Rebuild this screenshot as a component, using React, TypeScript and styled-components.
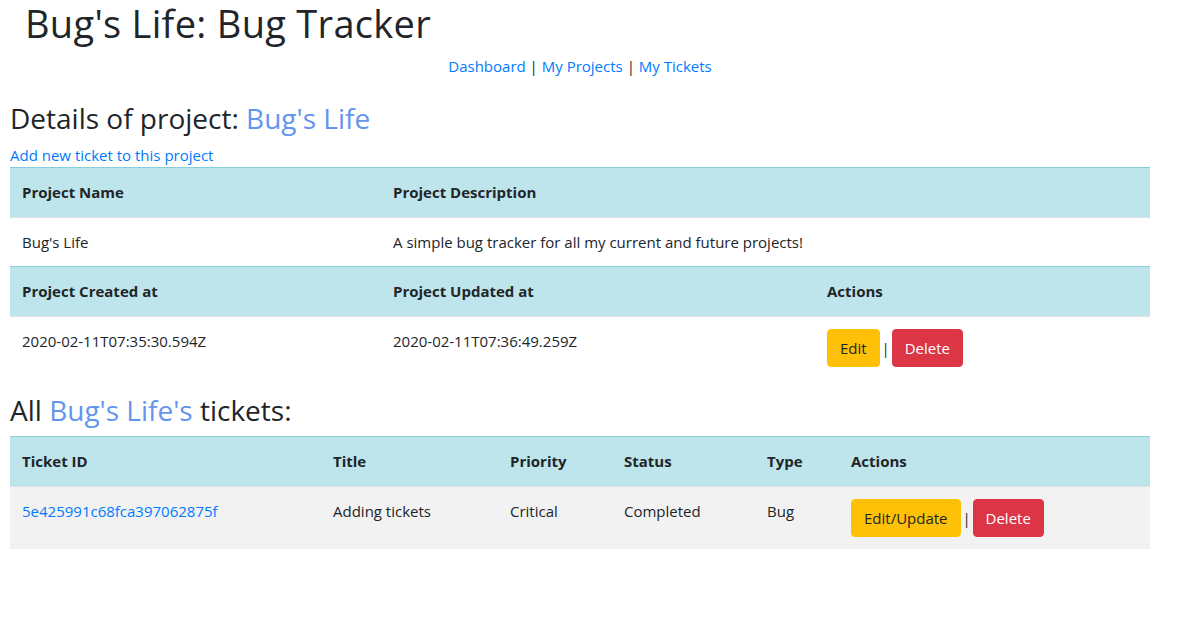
import React from "react";
import styled, { createGlobalStyle } from "styled-components";

const Global = createGlobalStyle`
  html, body { margin: 0; padding: 0; background: #fff; }
  body {
    font-family: "Open Sans", "Noto Sans", sans-serif;
    font-size: 15px;
    line-height: 24px;
    color: #212529;
  }
  * { box-sizing: border-box; }
`;

const Page = styled.div`
  width: 1140px;
  margin-left: 10px;
  padding-top: 1px;
`;

const Title = styled.h1`
  margin: 0 0 7px 15px;
  font-size: 38px;
  font-weight: 400;
  line-height: 1.2;
  letter-spacing: 0.3px;
  color: #212529;
`;

const Nav = styled.nav`
  text-align: center;
  margin-bottom: 24px;
  color: #212529;
`;

const Link = styled.a`
  color: #007bff;
  text-decoration: none;
`;

const Heading = styled.h3`
  margin: 0 0 8px;
  font-size: 28px;
  font-weight: 400;
  line-height: 1.2;
`;

const Accent = styled.span`
  color: #6495ed;
`;

const Table = styled.table`
  width: 100%;
  border-collapse: collapse;
  table-layout: fixed;
  margin-bottom: 15px;
`;

const Row = styled.tr<{ $striped?: boolean }>`
  background: ${(p) => (p.$striped ? "#f2f2f2" : "#fff")};
`;

const HeadRow = styled.tr`
  background: #bee5eb;
`;

const Th = styled.th`
  text-align: left;
  font-weight: 700;
  padding: 12px 12px 13px;
  vertical-align: top;
  border-top: 1px solid #86cfda;
`;

const Td = styled.td`
  padding: 12px;
  vertical-align: top;
  border-top: 1px solid #dee2e6;
`;

const Actions = styled.div`
  display: flex;
  align-items: center;
`;

const Sep = styled.span`
  width: 12px;
  text-align: center;
`;

const Button = styled.button<{ $variant: "warning" | "danger" }>`
  font-family: inherit;
  font-size: 15px;
  line-height: 24px;
  padding: 6px 12px;
  border-radius: 4px;
  border: 1px solid ${(p) => (p.$variant === "warning" ? "#ffc107" : "#dc3545")};
  background: ${(p) => (p.$variant === "warning" ? "#ffc107" : "#dc3545")};
  color: ${(p) => (p.$variant === "warning" ? "#212529" : "#fff")};
  cursor: pointer;
`;

export default function App() {
  return (
    <>
      <Global />
      <Page>
        <Title>Bug's Life: Bug Tracker</Title>
        <Nav>
          <Link href="#">Dashboard</Link> | <Link href="#">My Projects</Link> |{" "}
          <Link href="#">My Tickets</Link>
        </Nav>
        <Heading>
          Details of project: <Accent>Bug's Life</Accent>
        </Heading>
        <Link href="#">Add new ticket to this project</Link>
        <Table>
          <colgroup>
            <col style={{ width: 371 }} />
            <col style={{ width: 434 }} />
            <col style={{ width: 335 }} />
          </colgroup>
          <tbody>
            <HeadRow>
              <Th>Project Name</Th>
              <Th colSpan={2}>Project Description</Th>
            </HeadRow>
            <Row>
              <Td>Bug's Life</Td>
              <Td colSpan={2}>A simple bug tracker for all my current and future projects!</Td>
            </Row>
            <HeadRow>
              <Th>Project Created at</Th>
              <Th>Project Updated at</Th>
              <Th>Actions</Th>
            </HeadRow>
            <Row>
              <Td>2020-02-11T07:35:30.594Z</Td>
              <Td>2020-02-11T07:36:49.259Z</Td>
              <Td>
                <Actions>
                  <Button $variant="warning">Edit</Button>
                  <Sep>|</Sep>
                  <Button $variant="danger">Delete</Button>
                </Actions>
              </Td>
            </Row>
          </tbody>
        </Table>
        <Heading>
          All <Accent>Bug's Life's</Accent> tickets:
        </Heading>
        <Table>
          <colgroup>
            <col style={{ width: 311 }} />
            <col style={{ width: 177 }} />
            <col style={{ width: 114 }} />
            <col style={{ width: 143 }} />
            <col style={{ width: 84 }} />
            <col style={{ width: 311 }} />
          </colgroup>
          <thead>
            <HeadRow>
              <Th>Ticket ID</Th>
              <Th>Title</Th>
              <Th>Priority</Th>
              <Th>Status</Th>
              <Th>Type</Th>
              <Th>Actions</Th>
            </HeadRow>
          </thead>
          <tbody>
            <Row $striped>
              <Td>
                <Link href="#">5e425991c68fca397062875f</Link>
              </Td>
              <Td>Adding tickets</Td>
              <Td>Critical</Td>
              <Td>Completed</Td>
              <Td>Bug</Td>
              <Td>
                <Actions>
                  <Button $variant="warning">Edit/Update</Button>
                  <Sep>|</Sep>
                  <Button $variant="danger">Delete</Button>
                </Actions>
              </Td>
            </Row>
          </tbody>
        </Table>
      </Page>
    </>
  );
}
